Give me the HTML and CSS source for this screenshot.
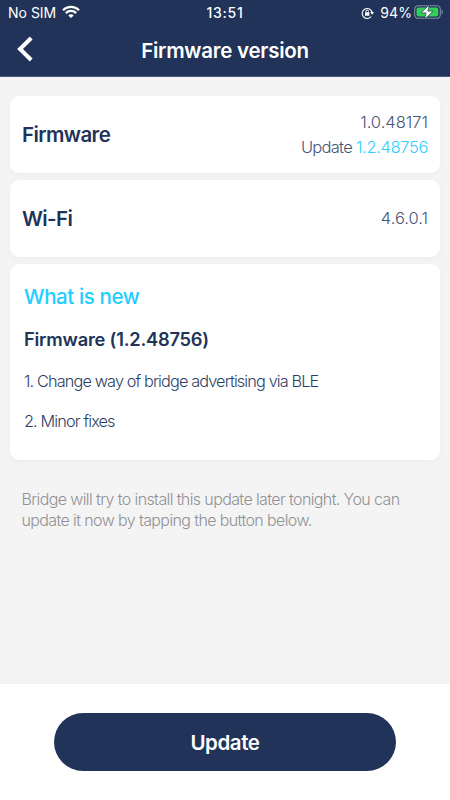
FILE: index.html
```html
<!DOCTYPE html>
<html lang="en">
<head>
<meta charset="utf-8">
<title>Firmware version</title>
<link rel="stylesheet" href="styles.css">
</head>
<body>
<header class="header">
  <div class="status">
    <div class="status-left">
      <span class="carrier">No SIM</span>
      <svg class="wifi" width="18" height="14" viewBox="0 0 18 14" fill="none" stroke="#fff" stroke-width="2.2">
        <path d="M1 5.2C5.5.7 12.5.7 17 5.2"/>
        <path d="M3.8 8.1c3-2.9 7.4-2.9 10.4 0"/>
        <path d="M9 13.1 6.3 10.4c1.5-1.4 3.9-1.4 5.4 0z" fill="#fff" stroke="none"/>
      </svg>
    </div>
    <span class="clock">13:51</span>
    <div class="status-right">
      <svg class="lock" width="14" height="12" viewBox="0 0 14 12" fill="none" stroke="#fff" stroke-width="1.1">
        <path d="M10.2 9.5A5 5 0 1 1 11.1 5.4"/>
        <path d="M9.2 5h3.8l-1.9 2.7z" fill="#fff" stroke="none"/>
        <rect x="4" y="5.3" width="4.4" height="3.4" rx=".5" fill="#fff" stroke="none"/>
        <path d="M4.9 5.5V4.4a1.3 1.3 0 0 1 2.6 0v1.1" stroke-width=".9"/>
      </svg>
      <span class="percent">94%</span>
      <svg class="battery" width="30" height="16" viewBox="0 0 30 16">
        <rect x=".7" y="1.7" width="25.6" height="12.6" rx="3.6" fill="none" stroke="#858fa7" stroke-width="1.1"/>
        <rect x="2.5" y="3.5" width="21.8" height="9" rx="2" fill="#31d158"/>
        <path d="M27.7 5.7c1.6.6 1.6 4 0 4.6z" fill="#858fa7"/>
        <path d="M15.3.6 7.2 8.9h4.9L10.5 15.4l8.7-8.3h-5.3z" fill="#fff" stroke="#213359" stroke-width=".7"/>
      </svg>
    </div>
  </div>
  <div class="nav">
    <svg class="back" width="18" height="26" viewBox="0 0 18 26" fill="none" stroke="#fff" stroke-width="4">
      <path d="M15.2 2 4 13l11.2 11"/>
    </svg>
    <h1 class="title">Firmware version</h1>
  </div>
</header>
<main class="main">
  <section class="card row">
    <h2 class="label">Firmware</h2>
    <div class="values">
      <div class="value">1.0.48171</div>
      <div class="value"><span class="update">Update </span><span class="new">1.2.48756</span></div>
    </div>
  </section>
  <section class="card row">
    <h2 class="label">Wi-Fi</h2>
    <div class="value">4.6.0.1</div>
  </section>
  <section class="card news">
    <h2 class="news-title">What is new</h2>
    <h3 class="news-version">Firmware (1.2.48756)</h3>
    <p class="item">1. Change way of bridge advertising via BLE</p>
    <p class="item">2. Minor fixes</p>
  </section>
  <p class="note">Bridge will try to install this update later tonight. You can<br>update it now by tapping the button below.</p>
</main>
<footer class="footer">
  <button class="button" type="button">Update</button>
</footer>
</body>
</html>
```

FILE: styles.css
```css
* { box-sizing: border-box; }
body {
  margin: 0;
  width: 450px;
  height: 800px;
  overflow: hidden;
  display: flex;
  flex-direction: column;
  background: #f4f4f4;
  color: #213359;
  font-family: Inter, "Liberation Sans", sans-serif;
}
h1, h2, h3, p { margin: 0; white-space: nowrap; }
svg { display: block; flex: none; }
.header { height: 77px; background: #213359; color: #fff; border-bottom: 1px solid #4b5977; }
.status {
  display: grid;
  grid-template-columns: 1fr auto 1fr;
  align-items: center;
  height: 25px;
  padding: 0 6px 0 8px;
  font-size: 14px;
  line-height: 25px;
}
.status-left, .status-right { display: flex; align-items: center; }
.status-right { justify-content: flex-end; }
.wifi { margin-left: 6px; margin-top: -2px; }
.clock { font-weight: 500; letter-spacing: .75px; margin-right: 2px; }
.lock { margin-right: 5px; }
.battery { margin-left: 2px; margin-top: -2px; }
.percent { letter-spacing: .1px; }
.nav { display: grid; grid-template-columns: 50px 1fr 50px; align-items: center; height: 51px; }
.back { margin-left: 15.5px; margin-top: -3px; }
.title { text-align: center; font-size: 20.5px; font-weight: 600; line-height: 30px; letter-spacing: -.25px; padding-top: 1px; }
.main { flex: 1; padding: 19px 10px 0; }
.card { background: #fff; border-radius: 9px; box-shadow: 0 2px 6px rgba(0, 0, 0, .035); margin-bottom: 7px; }
.row { height: 77px; display: flex; align-items: center; justify-content: space-between; padding: 0 12px; }
.label { font-size: 20.5px; font-weight: 600; line-height: 26px; letter-spacing: -.6px; padding-top: 1px; }
.value { font-size: 16.5px; font-weight: 300; line-height: 25px; text-align: right; color: #46557a; }
.update { letter-spacing: -.72px; }
.new { color: #33ceff; letter-spacing: -.35px; }
.news { height: 196px; padding: 20px 14px 0; }
.news-title { font-size: 20.5px; line-height: 26px; font-weight: 500; letter-spacing: -.4px; color: #22cdff; }
.news-version { margin-top: 17px; font-size: 18.3px; line-height: 24px; font-weight: 600; letter-spacing: -.22px; }
.item { margin-top: 20px; font-size: 16.3px; line-height: 20px; font-weight: 300; letter-spacing: -.87px; color: #2e3f66; }
.news-version + .item { margin-top: 20px; }
.note { margin: 29px 0 0 11.5px; font-size: 16px; line-height: 21px; font-weight: 300; letter-spacing: -.61px; color: #929295; }
.footer { height: 116px; padding-top: 29px; display: flex; justify-content: center; align-items: flex-start; background: #fff; box-shadow: 0 0 3px rgba(0, 0, 0, .04); }
.button {
  width: 342px;
  height: 58px;
  padding: 0;
  border: 0;
  border-radius: 29px;
  background: #213359;
  color: #fff;
  font: 600 20.5px/60px Inter, "Liberation Sans", sans-serif;
  letter-spacing: -.4px;
}
```
